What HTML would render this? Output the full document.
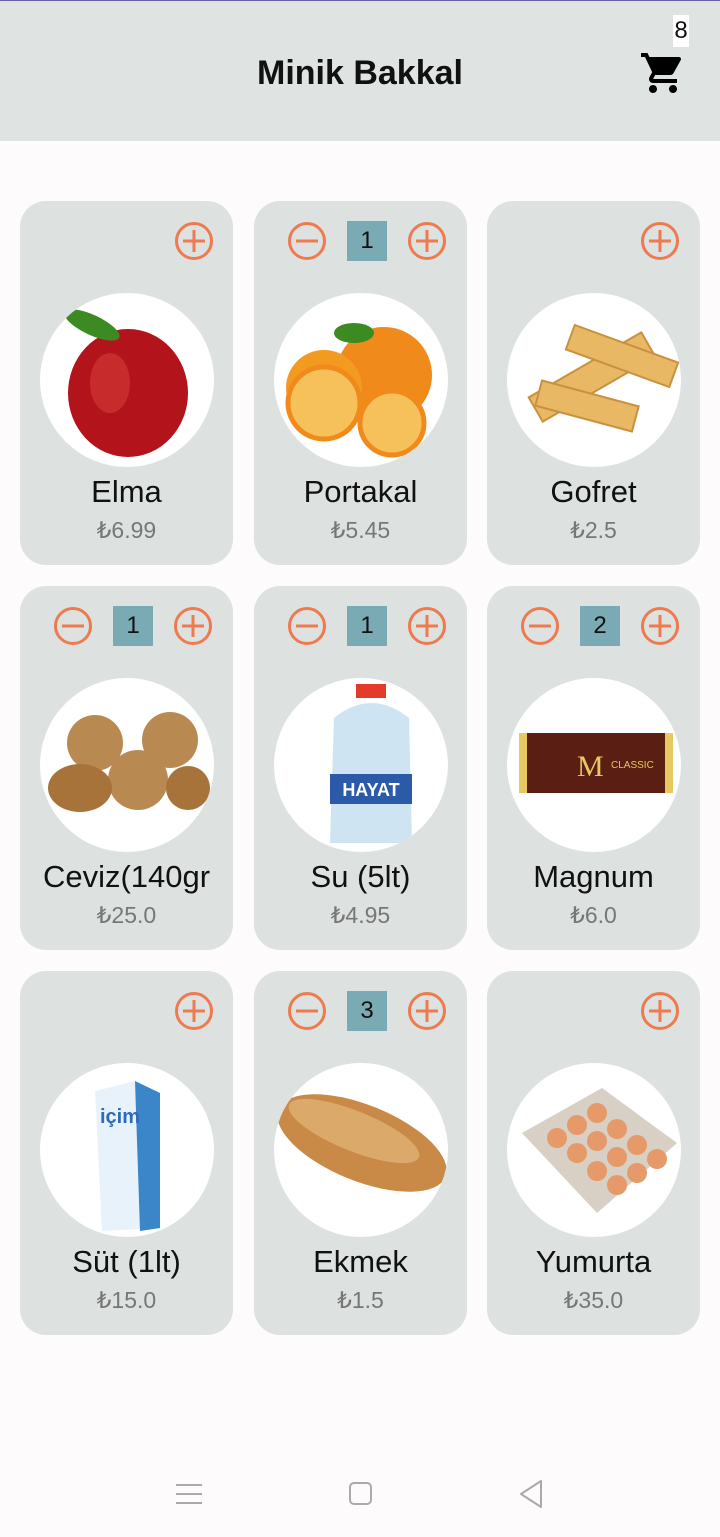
<!DOCTYPE html>
<html><head><meta charset="utf-8"><style>
*{margin:0;padding:0;box-sizing:border-box}
body{width:720px;height:1537px;background:#fdfbfb;font-family:"Liberation Sans",sans-serif;position:relative;overflow:hidden}
.hdr{position:absolute;left:0;top:0;width:720px;height:141px;background:#dfe3e2;border-top:1px solid #6a5fa0}
.ttl{position:absolute;left:0;width:720px;top:53px;text-align:center;font-size:34px;font-weight:bold;color:#111}
.badge{position:absolute;left:673px;top:14px;width:16px;height:32px;background:#fff;font-size:24px;text-align:center;line-height:32px;color:#111}
.card{position:absolute;width:213px;height:364px;background:#dde1e0;border-radius:26px}
.circ{position:absolute;left:20px;top:92px;width:174px;height:174px;border-radius:50%;background:#fff;overflow:hidden}
.nm{position:absolute;left:0;width:100%;top:273px;text-align:center;font-size:31px;color:#111;white-space:nowrap}
.pr{position:absolute;left:0;width:100%;top:316px;text-align:center;font-size:23px;color:#777}
.btn{position:absolute;top:20px;width:40px;height:40px}
.cnt{position:absolute;top:20px;left:93px;width:40px;height:40px;background:#7aaab4;font-size:24px;line-height:40px;text-align:center;color:#111}
</style></head><body>
<div class="hdr"><div class="ttl">Minik Bakkal</div><div class="badge">8</div>
<svg style="position:absolute;left:639px;top:48px" width="48" height="48" viewBox="0 0 24 24"><path fill="#000" d="M7 18c-1.1 0-2 .9-2 2s.9 2 2 2 2-.9 2-2-.9-2-2-2zM1 2v2h2l3.6 7.59-1.35 2.45c-.16.28-.25.61-.25.96 0 1.1.9 2 2 2h12v-2H7.420c-.14 0-.25-.11-.25-.25l.03-.12.9-1.63h7.45c.75 0 1.41-.41 1.750-1.03l3.58-6.49A1 1 0 0 0 20 4H5.21l-.94-2H1zm16 16c-1.1 0-2 .9-2 2s.9 2 2 2 2-.9 2-2-.9-2-2-2z"/></svg></div>

<svg width="0" height="0" style="position:absolute"><defs>
<symbol id="p" viewBox="0 0 40 40"><circle cx="20" cy="20" r="17.5" fill="none" stroke="#ee7a4e" stroke-width="3"/><path d="M9 20h22M20 9v22" stroke="#ee7a4e" stroke-width="3"/></symbol>
<symbol id="m" viewBox="0 0 40 40"><circle cx="20" cy="20" r="17.5" fill="none" stroke="#ee7a4e" stroke-width="3"/><path d="M9 20h22" stroke="#ee7a4e" stroke-width="3"/></symbol>
</defs></svg>

<div class="card" style="left:20px;top:201px"><svg class="btn" style="left:154px"><use href="#p"/></svg>
<div class="circ"><svg width="174" height="174"><ellipse cx="88" cy="100" rx="60" ry="64" fill="#b3141c"/><ellipse cx="70" cy="90" rx="20" ry="30" fill="#d43a35" opacity=".6"/><ellipse cx="52" cy="32" rx="30" ry="10" fill="#3c8a22" transform="rotate(25 52 32)"/></svg></div>
<div class="nm">Elma</div><div class="pr">₺6.99</div></div>

<div class="card" style="left:254px;top:201px"><svg class="btn" style="left:33px"><use href="#m"/></svg><div class="cnt">1</div><svg class="btn" style="left:153px"><use href="#p"/></svg>
<div class="circ"><svg width="174" height="174"><circle cx="110" cy="82" r="48" fill="#f08a1a"/><circle cx="50" cy="95" r="38" fill="#f39b20"/><circle cx="50" cy="110" r="36" fill="#f6c05a" stroke="#f08a1a" stroke-width="5"/><circle cx="118" cy="130" r="32" fill="#f6c05a" stroke="#f08a1a" stroke-width="5"/><ellipse cx="80" cy="40" rx="20" ry="10" fill="#3c8a22"/></svg></div>
<div class="nm">Portakal</div><div class="pr">₺5.45</div></div>

<div class="card" style="left:487px;top:201px"><svg class="btn" style="left:153px"><use href="#p"/></svg>
<div class="circ"><svg width="174" height="174"><g fill="#e8b865" stroke="#c9913d" stroke-width="2"><rect x="20" y="70" width="130" height="28" transform="rotate(-30 85 84)"/><rect x="60" y="50" width="110" height="26" transform="rotate(20 115 63)"/><rect x="30" y="100" width="100" height="26" transform="rotate(15 80 113)"/></g></svg></div>
<div class="nm">Gofret</div><div class="pr">₺2.5</div></div>

<div class="card" style="left:20px;top:586px"><svg class="btn" style="left:33px"><use href="#m"/></svg><div class="cnt">1</div><svg class="btn" style="left:153px"><use href="#p"/></svg>
<div class="circ"><svg width="174" height="174"><g fill="#b88a52"><circle cx="55" cy="65" r="28"/><circle cx="130" cy="62" r="28"/><circle cx="98" cy="102" r="30"/><ellipse cx="40" cy="110" rx="32" ry="24" fill="#a8733a"/><circle cx="148" cy="110" r="22" fill="#a8733a"/></g></svg></div>
<div class="nm">Ceviz(140gr</div><div class="pr">₺25.0</div></div>

<div class="card" style="left:254px;top:586px"><svg class="btn" style="left:33px"><use href="#m"/></svg><div class="cnt">1</div><svg class="btn" style="left:153px"><use href="#p"/></svg>
<div class="circ"><svg width="174" height="174"><rect x="82" y="6" width="30" height="14" fill="#e53a2a"/><path d="M60 40 Q97 10 135 40 L138 165 L56 165Z" fill="#cfe4f2"/><rect x="56" y="96" width="82" height="30" fill="#2a5aa8"/><text x="97" y="118" text-anchor="middle" font-size="18" font-weight="bold" fill="#fff" font-family="Liberation Sans">HAYAT</text></svg></div>
<div class="nm">Su (5lt)</div><div class="pr">₺4.95</div></div>

<div class="card" style="left:487px;top:586px"><svg class="btn" style="left:33px"><use href="#m"/></svg><div class="cnt">2</div><svg class="btn" style="left:153px"><use href="#p"/></svg>
<div class="circ"><svg width="174" height="174"><rect x="12" y="55" width="154" height="60" fill="#5a1e12"/><rect x="12" y="55" width="8" height="60" fill="#e8c860"/><rect x="158" y="55" width="8" height="60" fill="#e8c860"/><text x="70" y="98" font-size="30" fill="#e8c860" font-family="Liberation Serif">M</text><text x="104" y="90" font-size="10" fill="#e8c860" font-family="Liberation Sans">CLASSIC</text></svg></div>
<div class="nm">Magnum</div><div class="pr">₺6.0</div></div>

<div class="card" style="left:20px;top:971px"><svg class="btn" style="left:154px"><use href="#p"/></svg>
<div class="circ"><svg width="174" height="174"><path d="M55 28 L95 18 L120 30 L120 165 L62 168Z" fill="#e8f2fa"/><path d="M95 18 L120 30 L120 165 L100 168Z" fill="#3a86c8"/><text x="60" y="60" font-size="20" font-weight="bold" fill="#2a6cb8" font-family="Liberation Sans">içim</text></svg></div>
<div class="nm">Süt (1lt)</div><div class="pr">₺15.0</div></div>

<div class="card" style="left:254px;top:971px"><svg class="btn" style="left:33px"><use href="#m"/></svg><div class="cnt">3</div><svg class="btn" style="left:153px"><use href="#p"/></svg>
<div class="circ"><svg width="174" height="174"><ellipse cx="88" cy="80" rx="90" ry="38" fill="#c98a48" transform="rotate(22 88 80)"/><ellipse cx="80" cy="68" rx="70" ry="20" fill="#dba96a" transform="rotate(22 80 68)"/></svg></div>
<div class="nm">Ekmek</div><div class="pr">₺1.5</div></div>

<div class="card" style="left:487px;top:971px"><svg class="btn" style="left:153px"><use href="#p"/></svg>
<div class="circ"><svg width="174" height="174"><path d="M15 70 L95 25 L170 80 L90 150Z" fill="#d8d0c4"/><g fill="#e69a6a"><circle cx="50" cy="75" r="10"/><circle cx="70" cy="62" r="10"/><circle cx="90" cy="50" r="10"/><circle cx="70" cy="90" r="10"/><circle cx="90" cy="78" r="10"/><circle cx="110" cy="66" r="10"/><circle cx="90" cy="108" r="10"/><circle cx="110" cy="94" r="10"/><circle cx="130" cy="82" r="10"/><circle cx="110" cy="122" r="10"/><circle cx="130" cy="110" r="10"/><circle cx="150" cy="96" r="10"/></g></svg></div>
<div class="nm">Yumurta</div><div class="pr">₺35.0</div></div>

<svg style="position:absolute;left:175px;top:1482px" width="28" height="24"><path d="M1 3h26M1 12h26M1 21h26" stroke="#aaa" stroke-width="2"/></svg>
<div style="position:absolute;left:349px;top:1482px;width:23px;height:23px;border:2px solid #aaa;border-radius:5px"></div>
<svg style="position:absolute;left:517px;top:1479px" width="28" height="30"><path d="M24 2 L4 15 L24 28Z" fill="none" stroke="#aaa" stroke-width="2" stroke-linejoin="round"/></svg>
</body></html>
